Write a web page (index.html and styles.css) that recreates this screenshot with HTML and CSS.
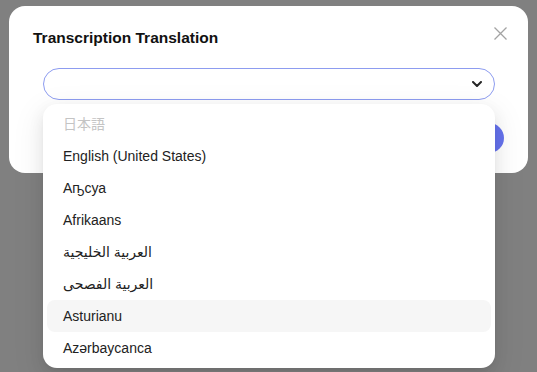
FILE: index.html
```html
<!DOCTYPE html>
<html lang="en">
<head>
<meta charset="utf-8">
<title>Transcription Translation</title>
<link rel="stylesheet" href="styles.css">
</head>
<body>
<div class="modal">
  <div class="modal-header">
    <h2 class="modal-title">Transcription Translation</h2>
    <button class="close-btn" aria-label="Close">
      <svg width="13" height="13" viewBox="0 0 13 13"><path d="M0.5 0.5L12.5 12.5M12.5 0.5L0.5 12.5" stroke="#a3a3a3" stroke-width="1.3" fill="none"/></svg>
    </button>
  </div>
  <div class="select-wrap">
    <div class="select">
      <span class="select-value"></span>
      <svg class="chevron" width="10" height="6" viewBox="0 0 10 6"><path d="M1 1L5 5L9 1" stroke="#262626" stroke-width="2" fill="none" stroke-linecap="round" stroke-linejoin="round"/></svg>
    </div>
    <ul class="dropdown">
      <li class="option disabled">日本語</li>
      <li class="option">English (United States)</li>
      <li class="option">Аҧсуа</li>
      <li class="option">Afrikaans</li>
      <li class="option">العربية الخليجية</li>
      <li class="option">العربية الفصحى</li>
      <li class="option active">Asturianu</li>
      <li class="option">Azərbaycanca</li>
    </ul>
  </div>
  <div class="modal-footer">
    <button class="primary-btn">Translate</button>
  </div>
</div>
</body>
</html>
```
FILE: styles.css
```css
html, body {
  margin: 0;
  height: 100%;
}
body {
  background: #808080;
  padding: 6px 9px;
  box-sizing: border-box;
  font-family: "Liberation Sans", Arial, "DejaVu Sans", "Noto Sans CJK JP", sans-serif;
  overflow: hidden;
}
.modal {
  position: relative;
  background: #fff;
  border-radius: 16px;
  padding: 22px 24px 20px 24px;
  height: 167px;
  box-sizing: border-box;
}
.modal-header {
  display: flex;
  justify-content: space-between;
  align-items: flex-start;
  margin-right: -3px;
}
.modal-title {
  margin: 0;
  font-size: 15.5px;
  line-height: 20px;
  font-weight: bold;
  color: #111;
}
.close-btn {
  border: 0;
  background: none;
  padding: 0;
  margin-top: -1px;
  width: 13px;
  height: 13px;
  display: block;
}
.close-btn svg { display: block; }
.select-wrap {
  position: relative;
  margin: 20px 9px 0 10px;
}
.select {
  height: 32px;
  box-sizing: border-box;
  border: 1px solid #8d9cf0;
  border-radius: 16px;
  display: flex;
  align-items: center;
  justify-content: flex-end;
  padding-right: 12px;
  background: #fff;
}
.chevron { display: block; }
.dropdown {
  position: absolute;
  left: 0;
  right: 0;
  top: 36px;
  margin: 0;
  padding: 4px;
  list-style: none;
  background: #fff;
  border-radius: 14px;
  box-shadow: 0 6px 16px rgba(0,0,0,0.08), 0 3px 6px -4px rgba(0,0,0,0.12), 0 9px 28px 8px rgba(0,0,0,0.05);
  z-index: 10;
}
.option {
  height: 32px;
  line-height: 32px;
  padding: 0 16px;
  font-size: 14px;
  color: #222;
  border-radius: 8px;
  white-space: nowrap;
}
.option.disabled {
  color: #c4c4c4;
}
.option.active {
  background: #f6f6f6;
}
.modal-footer {
  display: flex;
  justify-content: flex-end;
  margin-top: 23px;
}
.primary-btn {
  height: 30px;
  border: 0;
  border-radius: 15px;
  background: #6673ee;
  color: #fff;
  padding: 0 20px;
  font-family: inherit;
  font-size: 14px;
}
```
